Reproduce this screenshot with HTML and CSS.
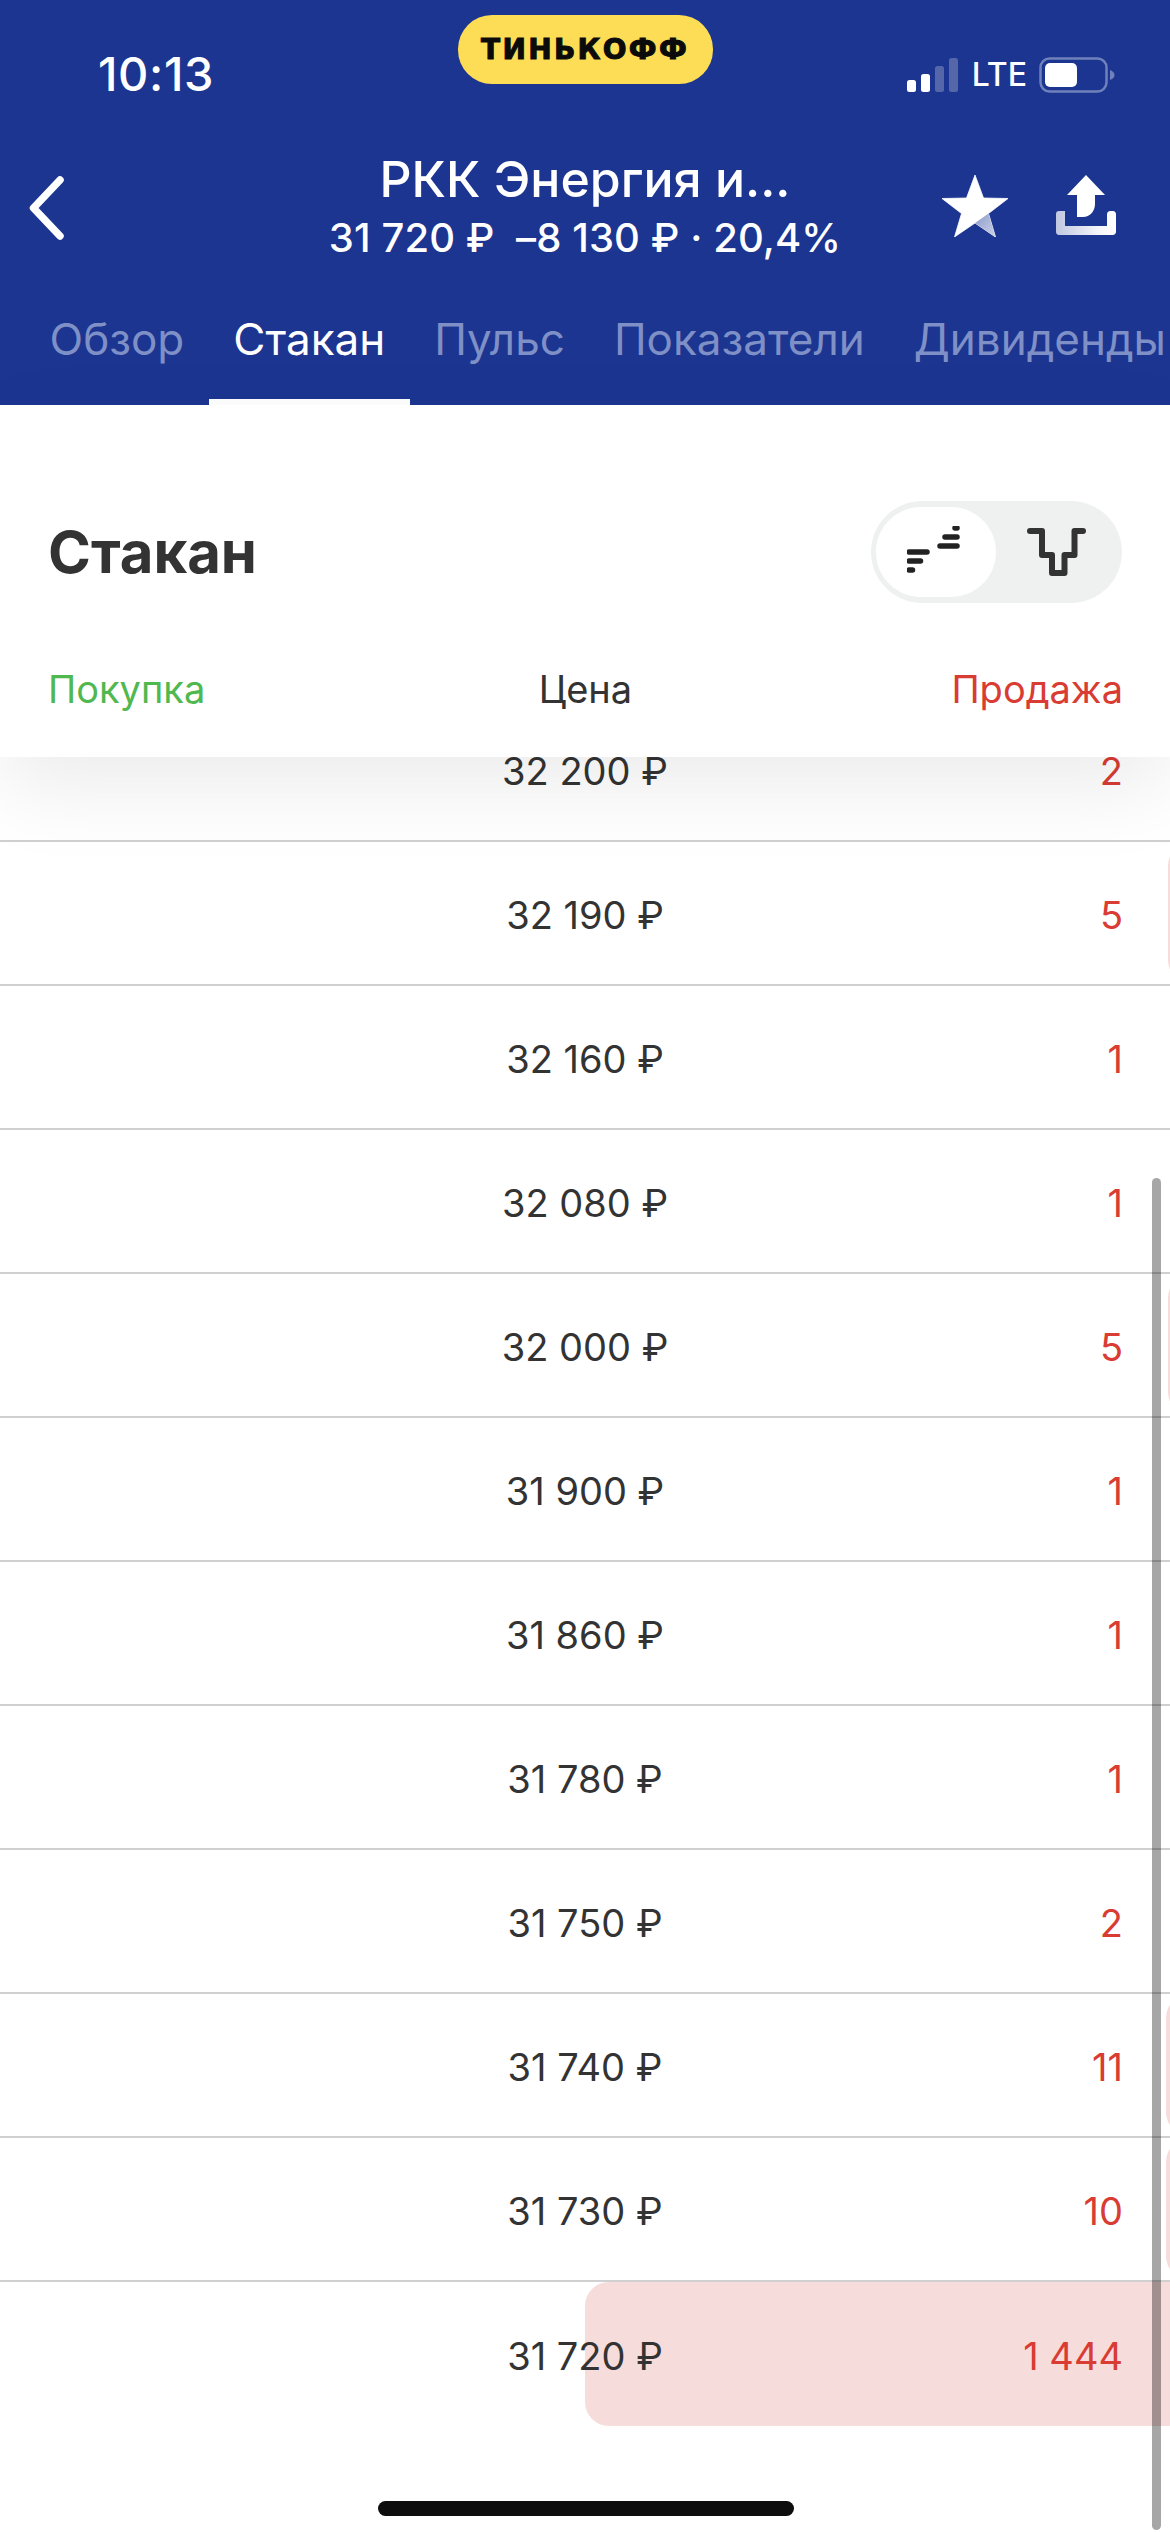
FILE: index.html
```html
<!DOCTYPE html>
<html lang="ru">
<head>
    <meta charset="UTF-8">
    <meta name="viewport" content="width=device-width, initial-scale=1.0">
    <title>Стакан</title>
    <link rel="stylesheet" href="styles.css">
</head>
<body>
    <div class="screen">
        <header class="top">
            <div class="status">
                <div class="time">10:13</div>
                <div class="brand"><span>ТИНЬКОФФ</span></div>
                <div class="status-right">
                    <svg class="signal" width="52" height="34" viewBox="0 0 52 34">
                        <rect x="0" y="22" width="9" height="12" rx="2.5" fill="#fff"/>
                        <rect x="14" y="16" width="9" height="18" rx="2.5" fill="#fff"/>
                        <rect x="28" y="8" width="9" height="26" rx="2.5" fill="#5567a8"/>
                        <rect x="42" y="0" width="9" height="34" rx="2.5" fill="#5567a8"/>
                    </svg>
                    <span class="lte">LTE</span>
                    <svg class="battery" width="76" height="36" viewBox="0 0 76 36">
                        <rect x="1.5" y="1.5" width="66" height="33" rx="9" fill="none" stroke="#6f81bb" stroke-width="2.5"/>
                        <rect x="6" y="6" width="32" height="24" rx="5" fill="#fff"/>
                        <path d="M71 13 C74 14 75.500 16 75.500 18 C75.500 20 74 22 71 23 Z" fill="#6f81bb"/>
                    </svg>
                </div>
            </div>
            <div class="nav">
                <a class="back">
                    <svg width="42" height="66" viewBox="0 0 42 66">
                        <path d="M34 5 L7.500 33 L34 61" fill="none" stroke="#fff" stroke-width="7.500" stroke-linecap="round" stroke-linejoin="round"/>
                    </svg>
                </a>
                <div class="nav-title">
                    <div class="name">РКК Энергия и...</div>
                    <div class="quote">31 720 ₽ &nbsp;–8 130 ₽ · 20,4%</div>
                </div>
                <div class="nav-actions">
                    <svg width="66" height="62" viewBox="0 0 66 62">
                        <defs>
                            <linearGradient id="starShade" x1="0" y1="0" x2="1" y2="1">
                                <stop offset="0" stop-color="#8c9aca"/>
                                <stop offset="1" stop-color="#ccd3e8"/>
                            </linearGradient>
                        </defs>
                        <path d="M33 0 L41.500 23 L66 23.500 L46.500 38.500 L53.500 62 L33 48 L12.500 62 L19.500 38.500 L0 23.500 L24.500 23 Z" fill="#fff" stroke="#fff" stroke-width="0.8" stroke-linejoin="round"/>
                        <path d="M33 48 L46.500 38.500 L53.500 62 Z" fill="url(#starShade)"/>
                    </svg>
                    <svg width="60" height="60" viewBox="0 0 60 60">
                        <defs>
                            <linearGradient id="trayShade" x1="0" y1="0" x2="1" y2="0">
                                <stop offset="0" stop-color="#c0c7e0"/>
                                <stop offset="0.7" stop-color="#f4f5fa"/>
                                <stop offset="1" stop-color="#fff"/>
                            </linearGradient>
                        </defs>
                        <path d="M30 0 L49 20 L39 20 L39 29 C39 36 34 42 27 42 L21 42 L21 20 L11 20 Z" fill="#fff"/>
                        <path d="M3 36 H9 V51 H51 V39 C51 37 53 36 54 36 H57 C59 36 60 38 60 39 V57 C60 59 58 60 57 60 H3 C1 60 0 58 0 57 V39 C0 37 1 36 3 36 Z" fill="url(#trayShade)"/>
                    </svg>
                </div>
            </div>
            <nav class="tabs">
                <a class="tab">Обзор</a>
                <a class="tab active">Стакан</a>
                <a class="tab">Пульс</a>
                <a class="tab">Показатели</a>
                <a class="tab">Дивиденды</a>
            </nav>
        </header>

        <section class="book-head">
            <div class="book-title">
                <h1>Стакан</h1>
                <div class="toggle">
                    <div class="toggle-item on">
                        <svg width="58" height="52" viewBox="0 0 58 52">
                            <g stroke="#222" stroke-width="5.500" stroke-linecap="round">
                                <path d="M2 26 H20"/>
                                <path d="M2 35 H13.500"/>
                                <path d="M2 44 H5.500"/>
                                <path d="M33 20 H50"/>
                                <path d="M38 11 H50"/>
                                <path d="M48 2 H50"/>
                            </g>
                        </svg>
                    </div>
                    <div class="toggle-item">
                        <svg width="60" height="50" viewBox="0 0 60 50">
                            <path d="M4 4 H16 V28 H26 V46 H38.500 V28 H48.500 V4 H57" fill="none" stroke="#333" stroke-width="6" stroke-linecap="round" stroke-linejoin="round"/>
                        </svg>
                    </div>
                </div>
            </div>
            <div class="book-cols">
                <span class="buy">Покупка</span>
                <span class="price-label">Цена</span>
                <span class="sell">Продажа</span>
            </div>
        </section>

        <div class="rows">
            <div class="row first"><span></span><span class="price">32 200 ₽</span><span class="qty">2</span></div>
            <div class="row"><div class="bar" style="left:1168px"></div><span></span><span class="price">32 190 ₽</span><span class="qty">5</span></div>
            <div class="row"><span></span><span class="price">32 160 ₽</span><span class="qty">1</span></div>
            <div class="row"><span></span><span class="price">32 080 ₽</span><span class="qty">1</span></div>
            <div class="row"><div class="bar" style="left:1168px"></div><span></span><span class="price">32 000 ₽</span><span class="qty">5</span></div>
            <div class="row"><span></span><span class="price">31 900 ₽</span><span class="qty">1</span></div>
            <div class="row"><span></span><span class="price">31 860 ₽</span><span class="qty">1</span></div>
            <div class="row"><span></span><span class="price">31 780 ₽</span><span class="qty">1</span></div>
            <div class="row"><span></span><span class="price">31 750 ₽</span><span class="qty">2</span></div>
            <div class="row"><div class="bar" style="left:1166px"></div><span></span><span class="price">31 740 ₽</span><span class="qty">11</span></div>
            <div class="row"><div class="bar" style="left:1166px"></div><span></span><span class="price">31 730 ₽</span><span class="qty">10</span></div>
            <div class="row"><div class="bar" style="left:585px"></div><span></span><span class="price">31 720 ₽</span><span class="qty">1 444</span></div>
        </div>

        <div class="scrollbar"></div>
        <div class="home-bar"></div>
    </div>
</body>
</html>
```

FILE: styles.css
```css
* {
    margin: 0;
    padding: 0;
    box-sizing: border-box;
    font-family: Inter, 'Liberation Sans', sans-serif;
}

body {
    background: #fff;
}

.screen {
    position: relative;
    width: 1170px;
    height: 2532px;
    overflow: hidden;
    display: flex;
    flex-direction: column;
    background: #fff;
}

/* Blue header */
.top {
    height: 405px;
    background: #1c3591;
    color: #fff;
    flex-shrink: 0;
}

.status {
    display: grid;
    grid-template-columns: 1fr 255px 1fr;
    height: 130px;
    padding-top: 15px;
}

.time {
    padding: 36px 0 0 98px;
    font-size: 47px;
    line-height: 46px;
    font-weight: 500;
    letter-spacing: 0.6px;
}

.brand {
    height: 69px;
    background: #fedd56;
    border-radius: 34px;
    display: flex;
    justify-content: center;
    align-items: center;
}

.brand span {
    font-family: 'DejaVu Sans', sans-serif;
    font-weight: 700;
    font-size: 28px;
    color: #0b0b0b;
    letter-spacing: 2.3px;
    -webkit-text-stroke: 1px #0b0b0b;
}

.status-right {
    display: flex;
    align-items: center;
    justify-content: flex-end;
    align-self: start;
    height: 36px;
    margin-top: 42px;
    padding-right: 55px;
}

.signal {
    margin-right: 13px;
}

.lte {
    font-size: 32px;
    font-weight: 500;
    line-height: 38px;
    margin-right: 12px;
}

.nav {
    display: grid;
    grid-template-columns: 1fr auto 1fr;
    height: 150px;
}

.back {
    display: block;
    padding: 45px 0 0 26px;
}

.nav-title {
    text-align: center;
    white-space: nowrap;
}

.name {
    font-size: 50px;
    line-height: 56px;
    font-weight: 500;
    margin-top: 21px;
}

.quote {
    font-size: 40px;
    line-height: 46px;
    font-weight: 500;
    letter-spacing: 0.1px;
    margin-top: 8px;
}

.nav-actions {
    display: flex;
    align-items: flex-start;
    justify-content: flex-end;
    gap: 48px;
    padding: 45px 54px 0 0;
}

.tabs {
    display: flex;
    height: 125px;
    padding-left: 25px;
    white-space: nowrap;
    overflow: hidden;
}

.tab {
    padding: 33px 24.5px 0;
    font-size: 44px;
    line-height: 52px;
    color: #7f90c6;
}

.tab.active {
    color: #fff;
    border-bottom: 6px solid #fff;
}

/* Order book head */
.book-head {
    position: relative;
    z-index: 2;
    height: 352px;
    flex-shrink: 0;
    background: #fff;
    box-shadow: 0 30px 80px rgba(0, 0, 0, 0.08);
}

.book-title {
    display: flex;
    justify-content: space-between;
    align-items: center;
    padding: 96px 48px 0 48px;
}

h1 {
    font-size: 58px;
    font-weight: 700;
    color: #333;
}

.toggle {
    display: flex;
    width: 251px;
    height: 102px;
    padding: 6px 5px;
    background: #eff1f1;
    border-radius: 51px;
}

.toggle-item {
    width: 120px;
    height: 90px;
    border-radius: 45px;
    display: flex;
    align-items: center;
    justify-content: center;
}

.toggle-item.on {
    background: #fff;
}

.book-cols {
    display: grid;
    grid-template-columns: 1fr auto 1fr;
    padding: 63px 47px 0 48px;
    font-size: 38px;
    line-height: 46px;
    color: #333;
}

.buy {
    color: #4fb84f;
}

.sell {
    color: #d83c33;
    text-align: right;
}

/* Rows */
.rows {
    flex: 1;
    overflow: hidden;
}

.row {
    position: relative;
    display: grid;
    grid-template-columns: 1fr auto 1fr;
    align-items: center;
    height: 144px;
    padding: 3px 47px 0;
    border-bottom: 2px solid #d0d0d0;
    font-size: 38px;
    color: #333;
}

.row:last-child {
    border-bottom: none;
}

.row.first {
    margin-top: -59px;
}

.bar {
    position: absolute;
    top: 0;
    bottom: 0;
    width: 585px;
    background: #f7dcdc;
    border-radius: 24px 0 0 24px;
}

.price, .qty {
    position: relative;
}

.qty {
    color: #d83c33;
    text-align: right;
}

/* Overlays */
.scrollbar {
    position: absolute;
    top: 1178px;
    left: 1152px;
    bottom: 2px;
    width: 9px;
    border-radius: 5px;
    background: rgba(0, 0, 0, 0.35);
    z-index: 3;
}

.home-bar {
    position: absolute;
    left: 378px;
    bottom: 16px;
    width: 416px;
    height: 15px;
    border-radius: 8px;
    background: #0d0d0d;
    z-index: 3;
}
```
